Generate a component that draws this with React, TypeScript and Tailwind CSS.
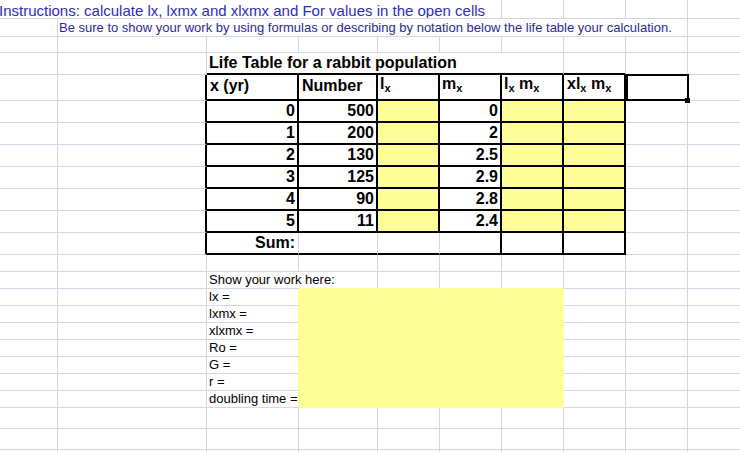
import React from 'react';

type B = 'g' | 't' | 'y' | 'k' | 'n';
interface Cell {
  content?: React.ReactNode;
  cls?: string;
  fill?: boolean;
  rb?: B;
  bb?: B;
  sel?: boolean;
}
interface Row {
  h: string;
  cells: Record<number, Cell>;
}

const COLW = [
  'w-[58px]',
  'w-[149px]',
  'w-[92px]',
  'w-[79px]',
  'w-[62px]',
  'w-[62px]',
  'w-[62px]',
  'w-[62px]',
  'w-[62px]',
  'w-[62px]',
];

const RB: Record<B, string> = {
  g: 'border-r border-r-[#d0d7e5]',
  t: '',
  n: '',
  y: 'border-r border-r-[#ffff99]',
  k: 'border-r-2 border-r-black',
};
const BB: Record<B, string> = {
  g: 'border-b border-b-[#d0d7e5]',
  t: '',
  n: '',
  y: 'border-b border-b-[#ffff99]',
  k: 'border-b-2 border-b-black',
};

function X() {
  return <span className="text-[11px] align-[-3px]">x</span>;
}

const HEAD = 'justify-start items-end pb-[5px] text-[16px] font-bold text-black';
const NUM = 'justify-end items-end pb-[2px] pr-[2px] text-[16px] font-bold text-black';
const LABEL = 'justify-start items-end pb-[2px] pl-[2px] text-[13px] text-black';

const xs = ['0', '1', '2', '3', '4', '5'];
const ns = ['500', '200', '130', '125', '90', '11'];
const ms = ['0', '2', '2.5', '2.9', '2.8', '2.4'];
const labels = ['lx =', 'lxmx =', 'xlxmx =', 'Ro =', 'G =', 'r =', 'doubling time ='];

const rows: Row[] = [];

rows.push({
  h: 'h-[19px]',
  cells: {
    0: {
      content: (
        <span className="-ml-[1px]">
          Instructions: calculate lx, lxmx and xlxmx and For values in the open cells
        </span>
      ),
      cls: 'justify-start items-end text-[15px] text-[#2d2dc2]',
      rb: 't',
    },
    1: { rb: 't' },
    2: { rb: 't' },
    3: { rb: 't' },
    4: { rb: 't' },
  },
});

rows.push({
  h: 'h-[18px]',
  cells: {
    1: {
      content:
        'Be sure to show your work by using formulas or describing by notation below the life table your calculation.',
      cls: 'justify-start items-end pb-[2px] pl-[1px] text-[13px] text-[#2a2a9e]',
      rb: 't',
    },
    2: { rb: 't' },
    3: { rb: 't' },
    4: { rb: 't' },
    5: { rb: 't' },
    6: { rb: 't' },
    7: { rb: 't' },
  },
});

rows.push({ h: 'h-[16px]', cells: {} });

rows.push({
  h: 'h-[22px]',
  cells: {
    2: {
      content: 'Life Table for a rabbit population',
      cls: 'justify-start items-end pb-[2px] pl-[2px] text-[16px] font-bold text-black',
      rb: 't',
      bb: 'k',
    },
    3: { rb: 't', bb: 'k' },
    4: { rb: 't', bb: 'k' },
    5: { rb: 't', bb: 'k' },
    6: { bb: 'k' },
    7: { bb: 'k' },
  },
});

rows.push({
  h: 'h-[26px]',
  cells: {
    1: { rb: 'k' },
    2: { content: 'x (yr)', cls: HEAD + ' pl-[3px]', rb: 'k', bb: 'k' },
    3: { content: 'Number', cls: HEAD + ' pl-[3px]', rb: 'k', bb: 'k' },
    4: {
      content: (
        <>
          l<X />
        </>
      ),
      cls: HEAD + ' pl-[2px]',
      rb: 'k',
      bb: 'k',
    },
    5: {
      content: (
        <>
          m<X />
        </>
      ),
      cls: HEAD + ' pl-[2px]',
      rb: 'k',
      bb: 'k',
    },
    6: {
      content: (
        <>
          l<X /> m<X />
        </>
      ),
      cls: HEAD + ' pl-[2px]',
      rb: 'k',
      bb: 'k',
    },
    7: {
      content: (
        <>
          xl<X /> m<X />
        </>
      ),
      cls: HEAD + ' pl-[3px]',
      rb: 'k',
      bb: 'k',
    },
    8: { sel: true },
  },
});

for (let i = 0; i < 6; i++) {
  rows.push({
    h: 'h-[22px]',
    cells: {
      1: { rb: 'k' },
      2: { content: xs[i], cls: NUM, rb: 'k', bb: 'k' },
      3: { content: ns[i], cls: NUM, rb: 'k', bb: 'k' },
      4: { fill: true, rb: 'k', bb: 'k' },
      5: { content: ms[i], cls: NUM, rb: 'k', bb: 'k' },
      6: { fill: true, rb: 'k', bb: 'k' },
      7: { fill: true, rb: 'k', bb: 'k' },
    },
  });
}

rows.push({
  h: 'h-[22px]',
  cells: {
    1: { rb: 'k' },
    2: {
      content: 'Sum:',
      cls: 'justify-end items-end pb-[2px] pr-[3px] text-[16px] font-bold text-black',
      rb: 'g',
      bb: 'k',
    },
    3: { rb: 'g', bb: 'k' },
    4: { rb: 'g', bb: 'k' },
    5: { rb: 'k', bb: 'k' },
    6: { rb: 'k', bb: 'k' },
    7: { rb: 'k', bb: 'k' },
  },
});

rows.push({ h: 'h-[17px]', cells: {} });

rows.push({
  h: 'h-[17px]',
  cells: {
    2: { content: 'Show your work here:', cls: LABEL, rb: 't' },
    3: { bb: 'y' },
    4: { bb: 'y' },
    5: { bb: 'y' },
    6: { bb: 'y' },
  },
});

for (let i = 0; i < labels.length; i++) {
  rows.push({
    h: 'h-[17px]',
    cells: {
      2: { content: labels[i], cls: LABEL, rb: 'y' },
      3: { fill: true, rb: 'n', bb: 'n' },
      4: { fill: true, rb: 'n', bb: 'n' },
      5: { fill: true, rb: 'n', bb: 'n' },
      6: { fill: true, rb: 'n', bb: 'n' },
    },
  });
}

rows.push({ h: 'h-[21px]', cells: {} });
rows.push({ h: 'h-[21px]', cells: {} });
rows.push({ h: 'h-[21px]', cells: {} });

function CellView({ c, cell }: { c: number; cell: Cell }) {
  const rb = cell.rb ?? 'g';
  const bb = cell.bb ?? 'g';
  return (
    <div
      className={[
        COLW[c],
        'h-full shrink-0 min-w-0 flex',
        RB[rb],
        BB[bb],
        cell.fill ? 'bg-[#ffff99]' : '',
        cell.sel ? 'relative' : '',
        cell.cls ?? '',
      ].join(' ')}
    >
      {cell.content !== undefined && (
        <span className="whitespace-nowrap leading-none shrink-0">{cell.content}</span>
      )}
      {cell.sel && (
        <>
          <div className="absolute left-0 top-[-1px] w-[63px] h-[27px] border-2 border-black z-10" />
          <div className="absolute left-[59px] top-[23px] w-[5px] h-[5px] bg-black z-20" />
        </>
      )}
    </div>
  );
}

export default function App() {
  return (
    <div
      className={`w-[740px] h-[452px] overflow-hidden bg-white ${"font-['Liberation_Sans',Arial,sans-serif]"}`}
    >
      {rows.map((row, r) => (
        <div key={r} className={`flex ${row.h}`}>
          {COLW.map((_, c) => (
            <CellView key={c} c={c} cell={row.cells[c] ?? {}} />
          ))}
        </div>
      ))}
    </div>
  );
}
